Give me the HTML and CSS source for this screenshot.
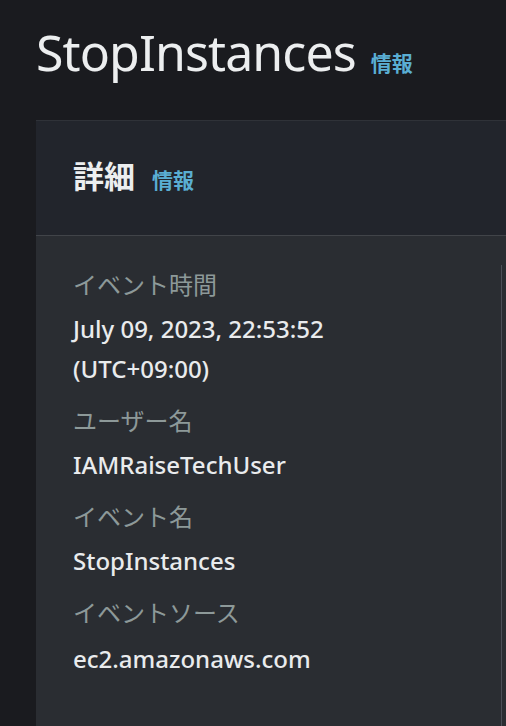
FILE: index.html
```html
<!DOCTYPE html>
<html lang="ja">
<head>
<meta charset="utf-8">
<link rel="stylesheet" href="styles.css">
</head>
<body>
<div class="page">
  <div class="title-row">
    <h1 class="title">StopInstances</h1>
    <a class="info" href="#">情報</a>
  </div>
  <section class="card">
    <header class="card-header">
      <h2 class="card-title">詳細</h2>
      <a class="info info-sm" href="#">情報</a>
    </header>
    <div class="card-body">
      <div class="column">
        <div class="item">
          <div class="label">イベント時間</div>
          <div class="value">July 09, 2023, 22:53:52 (UTC+09:00)</div>
        </div>
        <div class="item">
          <div class="label">ユーザー名</div>
          <div class="value">IAMRaiseTechUser</div>
        </div>
        <div class="item">
          <div class="label">イベント名</div>
          <div class="value">StopInstances</div>
        </div>
        <div class="item">
          <div class="label">イベントソース</div>
          <div class="value">ec2.amazonaws.com</div>
        </div>
      </div>
    </div>
  </section>
</div>
</body>
</html>
```

FILE: styles.css
```css
* { box-sizing: border-box; }
html, body { margin: 0; padding: 0; }
body {
  background: #1a1b1f;
  font-family: "Noto Sans", "Noto Sans CJK JP", sans-serif;
  color: #e9ebed;
  height: 726px;
  overflow: hidden;
}
.page {
  padding-left: 36px;
  display: flex;
  flex-direction: column;
  height: 100%;
}
.title-row {
  display: flex;
  align-items: baseline;
  gap: 15px;
  padding-top: 22px;
  height: 120px;
}
.title {
  margin: 0;
  font-size: 50px;
  line-height: 60px;
  letter-spacing: -0.9px;
  font-weight: 400;
  color: #eceeef;
}
.info {
  color: #5aaed3;
  text-decoration: none;
  font-weight: 700;
  font-size: 21px;
  font-family: "Noto Sans CJK JP", sans-serif;
}
.card {
  flex: 1;
  display: flex;
  flex-direction: column;
  border-top: 1px solid #2f3238;
}
.card-header {
  height: 115px;
  background: #22252c;
  border-bottom: 1px solid #414449;
  display: flex;
  align-items: baseline;
  padding-left: 37px;
  padding-top: 32px;
  gap: 17px;
}
.card-title {
  margin: 0;
  font-size: 31px;
  line-height: 44px;
  font-weight: 700;
  font-family: "Noto Sans CJK JP", sans-serif;
  color: #eceeef;
}
.card-body {
  flex: 1;
  background: #2a2d32;
  padding: 29px 0 0 37px;
}
.column {
  width: 429px;
  height: 100%;
  border-right: 1px solid #4b4f57;
  padding-right: 60px;
  display: flex;
  flex-direction: column;
  gap: 12px;
}
.item {
  display: flex;
  flex-direction: column;
  gap: 4px;
}
.label {
  font-size: 24px;
  line-height: 40px;
  color: #8d9999;
}
.value {
  font-size: 24px;
  line-height: 40px;
  font-weight: 500;
  color: #e9ebed;
}
.item:last-child .value {
  margin-top: 2px;
}
```
